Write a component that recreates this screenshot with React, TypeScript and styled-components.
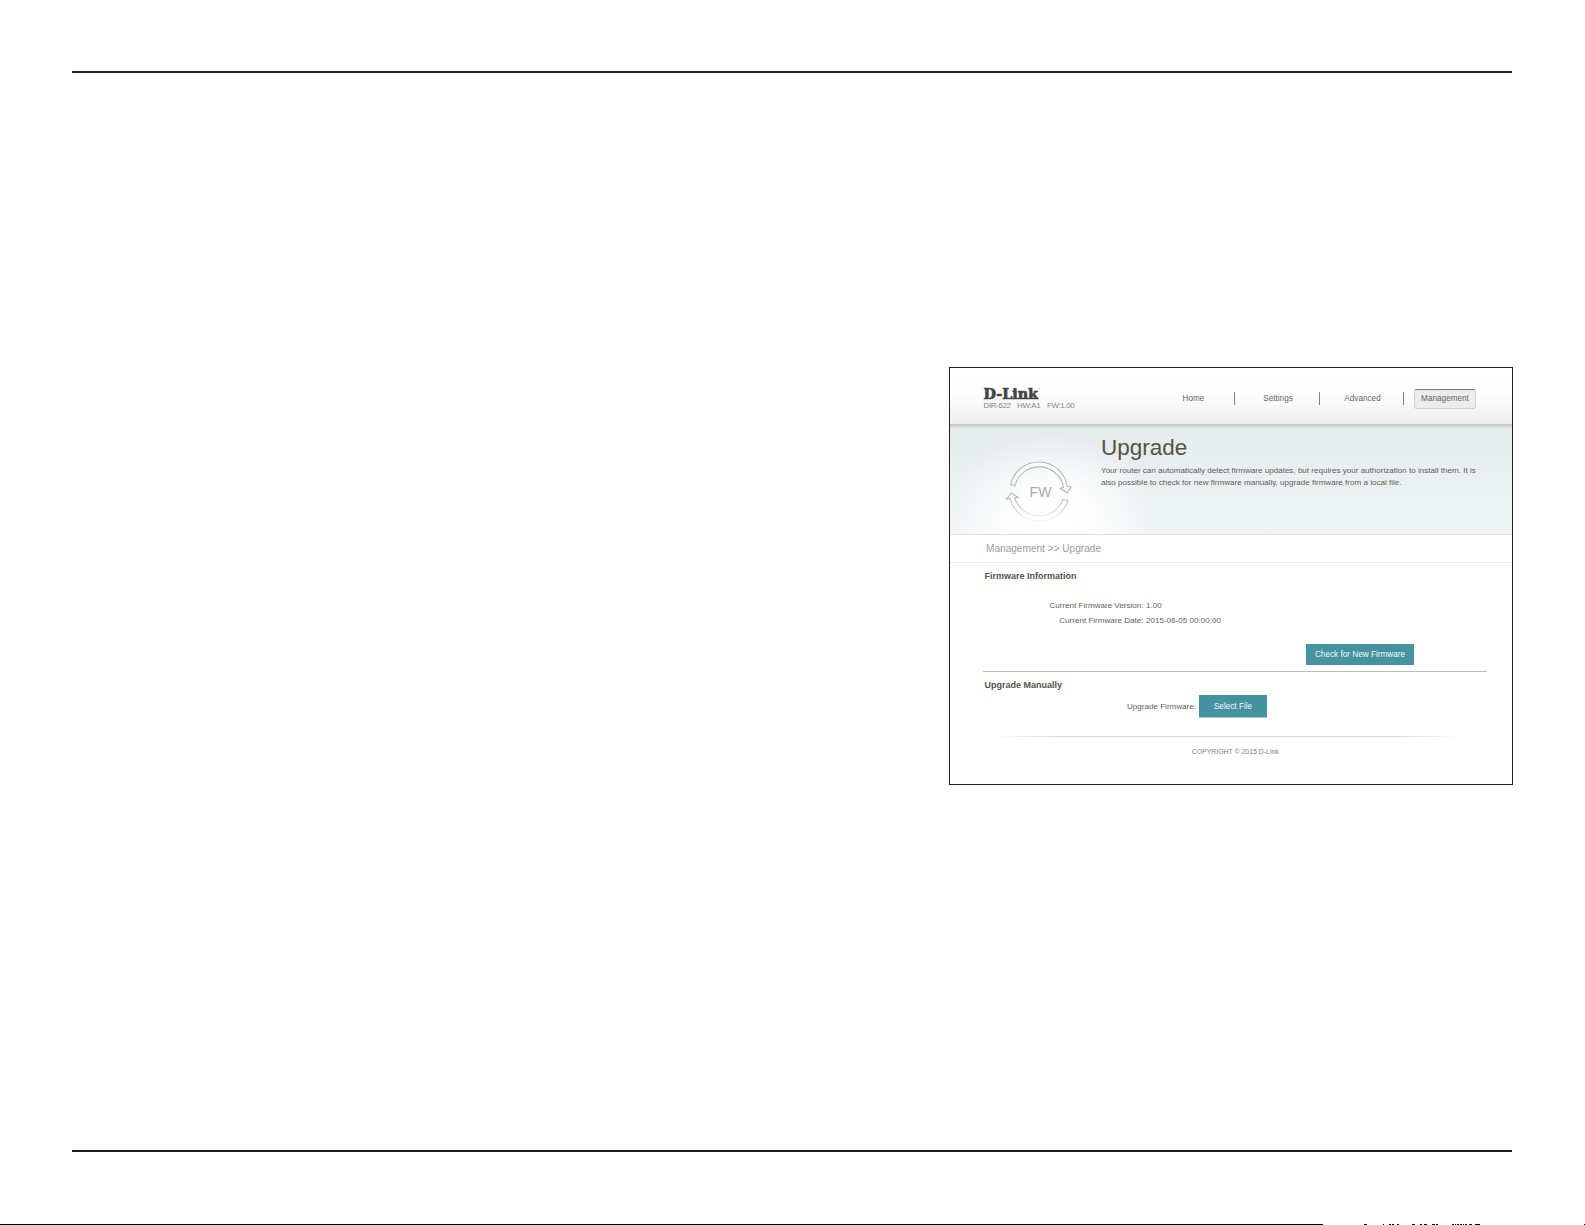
import React from "react";
import styled, { createGlobalStyle } from "styled-components";

const Global = createGlobalStyle`
  html, body { margin: 0; padding: 0; background: #fff; }
  body { font-family: "Liberation Sans", Arial, sans-serif; }
  * { box-sizing: border-box; }
`;

const Page = styled.div`
  width: 1585px;
  height: 1225px;
  overflow: hidden;
  background: #fff;
  display: flex;
  flex-direction: column;
`;

const PageBody = styled.main`
  margin: 71px 73px 0 72px;
  height: 1081px;
  flex: none;
  border-top: 2px solid #231f20;
  border-bottom: 2px solid #231f20;
  display: flex;
  justify-content: flex-end;
  align-items: flex-start;
  padding-top: 294px;
`;

const PageEdge = styled.svg`
  display: block;
  margin-top: auto;
  flex: none;
`;

const Panel = styled.section`
  width: 564px;
  height: 418px;
  margin-right: -1px;
  border: 1px solid #231f20;
  display: flex;
  flex-direction: column;
  color: #5f5f58;
  white-space: nowrap;
`;

const Header = styled.header`
  height: 57px;
  flex: none;
  display: flex;
  justify-content: space-between;
  padding: 0 36px 0 33px;
  background: linear-gradient(#fff 0, #fefefe 45%, #efefef 100%);
  border-bottom: 1px solid #c3c8c8;
`;

const Brand = styled.div`
  padding-top: 18px;
`;

const Logo = styled.svg`
  display: block;
  overflow: visible;
`;

const Versions = styled.div`
  display: grid;
  grid-template-columns: 33.5px 30px auto;
  padding-left: 0.5px;
  margin-top: 2px;
  font-size: 8px;
  letter-spacing: -0.4px;
  line-height: 9px;
  color: #888885;
`;

const Nav = styled.nav`
  display: grid;
  grid-template-columns: 84px 85px 84px 72px;
  padding-top: 21px;
  height: 42px;
`;

const NavCell = styled.div<{ $last?: boolean }>`
  display: flex;
  align-items: center;
  justify-content: center;
  height: 20px;
  position: relative;
  padding-left: ${(p) => (p.$last ? "10px" : "1px")};
  &:not(:last-child)::after {
    content: "";
    position: absolute;
    right: 0;
    top: 3px;
    width: 1px;
    height: 13px;
    background: #85857f;
  }
`;

const NavLink = styled.a<{ $active?: boolean }>`
  display: flex;
  align-items: center;
  justify-content: center;
  width: ${(p) => (p.$active ? "62px" : "auto")};
  height: 20px;
  padding-bottom: 1px;
  font-size: 8.2px;
  color: #666661;
  background: ${(p) => (p.$active ? "#ececec" : "transparent")};
  border: ${(p) => (p.$active ? "1px solid #d0d0d0" : "0")};
  border-top: ${(p) => (p.$active ? "1px solid #777774" : "0")};
  border-radius: 3px;
`;

const Banner = styled.div`
  height: 110px;
  flex: none;
  display: grid;
  grid-template-columns: 151px 1fr;
  border-bottom: 1px solid #dfe4e6;
  background:
    linear-gradient(rgba(170, 178, 180, 0.55), rgba(200, 208, 210, 0) 4px),
    radial-gradient(ellipse 105px 88px at 100px 98px, #fff 0, rgba(255, 255, 255, 0.92) 40%, rgba(255, 255, 255, 0) 100%),
    linear-gradient(#e5eaed, #eaf0f2 45%, #eef4f6);
`;

const UpdateIcon = styled.svg`
  display: block;
  margin: 31px 0 0 53px;
`;

const Title = styled.h1`
  margin: 10px 0 0;
  font-size: 22.5px;
  line-height: 26px;
  font-weight: 400;
  color: #55543e;
`;

const Description = styled.p`
  margin: 4px 0 0;
  font-size: 8.07px;
  line-height: 12px;
  color: #5f5e53;
`;

const Breadcrumb = styled.div`
  height: 28px;
  flex: none;
  padding-left: 36px;
  border-bottom: 1px solid #ebebeb;
  font-size: 10.1px;
  line-height: 27px;
  color: #9c9c9c;
`;

const SectionTitle = styled.h2`
  margin: 0;
  padding-left: 2px;
  font-size: 9px;
  line-height: 12px;
  font-weight: 700;
  color: #55544a;
`;

const Content = styled.div`
  margin: 0 25px 0 32.5px;
  display: flex;
  flex-direction: column;
`;

const InfoSection = styled.section`
  height: 109px;
  padding-top: 7px;
  border-bottom: 1px solid #bcbcbc;
`;

const Fields = styled.dl`
  margin: 16px 0 0;
  display: grid;
  grid-template-columns: 161px auto;
  column-gap: 2.5px;
  font-size: 8.07px;
  line-height: 15px;
  dt { text-align: right; }
  dd { margin: 0; }
`;

const Button = styled.button<{ $w: number; $h: number }>`
  display: block;
  width: ${(p) => p.$w}px;
  height: ${(p) => p.$h}px;
  padding: 0;
  border: 0;
  background: #4592a1;
  color: #f3fafb;
  font: 8.2px "Liberation Sans", Arial, sans-serif;
`;

const ActionRow = styled.div`
  display: flex;
  justify-content: flex-end;
  padding: 16px 73px 0 0;
`;

const ManualSection = styled.section`
  padding-top: 7px;
`;

const FileRow = styled.div`
  display: flex;
  align-items: center;
  gap: 3px;
  padding-left: 144.5px;
  margin-top: 4px;
  font-size: 8.07px;
`;

const FileButton = styled(Button)`
  box-shadow: 0 1px 0 #a5c9d0;
`;

const Footer = styled.footer`
  margin-top: 19px;
  padding: 11px 0 0 1px;
  text-align: center;
  font-size: 6.9px;
  line-height: 9px;
  color: #7c7c7c;
  background: linear-gradient(90deg, transparent 12px, #d8d8d8 70px, #d8d8d8 420px, transparent 476px) 0 0 / 100% 1px no-repeat;
`;

const navItems = ["Home", "Settings", "Advanced", "Management"];

const marks: [number, number][] = [
  [0, 1323], [1364, 3], [1383, 1], [1389, 2], [1392, 2], [1397, 2], [1412, 3], [1420, 2],
  [1424, 3], [1432, 3], [1436, 2], [1452, 2], [1455, 1], [1457, 2], [1460, 2], [1463, 1],
  [1465, 2], [1469, 3], [1475, 5], [1584, 1],
];

export default function App() {
  return (
    <>
      <Global />
      <Page>
        <PageBody>
          <Panel>
            <Header>
              <Brand>
                <Logo width="58" height="13" viewBox="0 0 58 13">
                  <text
                    x="0.5" y="13" fontFamily="'DejaVu Serif', serif" fontWeight="700" fontSize="14"
                    fill="#444" stroke="#444" strokeWidth="0.7" textLength="54.5" lengthAdjust="spacingAndGlyphs"
                  >
                    D-Link
                  </text>
                  <circle cx="56" cy="2.8" r="0.6" fill="#888" />
                </Logo>
                <Versions>
                  <span>DIR-622</span>
                  <span>HW:A1</span>
                  <span>FW:1.00</span>
                </Versions>
              </Brand>
              <Nav>
                {navItems.map((item, i) => (
                  <NavCell key={item} $last={i === 3}>
                    <NavLink $active={i === 3}>{item}</NavLink>
                  </NavCell>
                ))}
              </Nav>
            </Header>
            <Banner>
              <UpdateIcon width="76" height="66" viewBox="0 0 76 66">
                <defs>
                  <linearGradient id="fade" x1="0" y1="0" x2="0" y2="66" gradientUnits="userSpaceOnUse">
                    <stop offset="0.65" stopColor="#b3b6b7" />
                    <stop offset="0.95" stopColor="#eff0f1" />
                  </linearGradient>
                </defs>
                <g fill="#fff" fillOpacity="0.55" stroke="url(#fade)" strokeWidth="1.1">
                  <path d="M7.7 28.3 A28.9 28.9 0 0 1 64.3 30 L68 31 L64.3 37 L57.5 32.3 L60.5 31.3 A24.8 24.8 0 0 0 12 29.7 Z" />
                  <path d="M65 44.7 A30.3 30.3 0 0 1 7 42.4 L3.7 43 L8.3 37 L15 41.3 L11.7 42 A25.5 25.5 0 0 0 60 43.3 Z" />
                </g>
                <text x="26.6" y="40.5" fontSize="14" fill="#a9abac" fontFamily="'Liberation Sans', sans-serif">FW</text>
              </UpdateIcon>
              <div>
                <Title>Upgrade</Title>
                <Description>
                  Your router can automatically detect firmware updates, but requires your authorization to install them. It is
                  <br />
                  also possible to check for new firmware manually, upgrade firmware from a local file.
                </Description>
              </div>
            </Banner>
            <Breadcrumb>Management &gt;&gt; Upgrade</Breadcrumb>
            <Content>
              <InfoSection>
                <SectionTitle>Firmware Information</SectionTitle>
                <Fields>
                  <dt>Current Firmware Version:</dt>
                  <dd>1.00</dd>
                  <dt>Current Firmware Date:</dt>
                  <dd>2015-06-05 00:00:00</dd>
                </Fields>
                <ActionRow>
                  <Button $w={108} $h={21}>Check for New Firmware</Button>
                </ActionRow>
              </InfoSection>
              <ManualSection>
                <SectionTitle>Upgrade Manually</SectionTitle>
                <FileRow>
                  <span>Upgrade Firmware:</span>
                  <FileButton $w={68} $h={22}>Select File</FileButton>
                </FileRow>
              </ManualSection>
              <Footer>COPYRIGHT © 2015 D-Link</Footer>
            </Content>
          </Panel>
        </PageBody>
        <PageEdge width="1585" height="1" viewBox="0 0 1585 1" shapeRendering="crispEdges">
          {marks.map(([x, w]) => (
            <rect key={x} x={x} y="0" width={w} height="1" fill="#000" />
          ))}
        </PageEdge>
      </Page>
    </>
  );
}
